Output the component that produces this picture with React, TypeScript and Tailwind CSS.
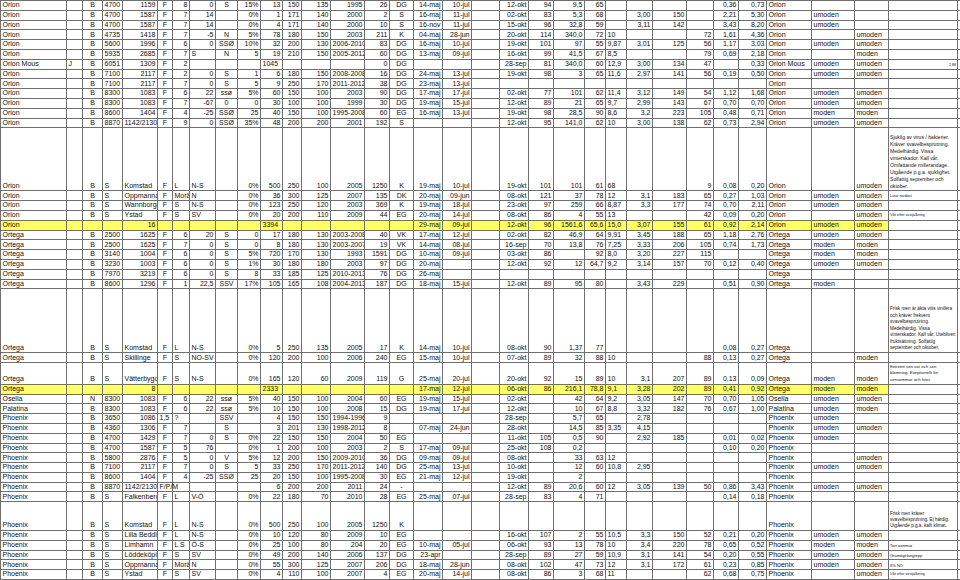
import React from "react";

// column widths, cols 0-33 (32 = notes, 33 = spill column at the right edge)
const WCLS = [
  "w-[66px]", "w-[16px]", "w-[20px]", "w-[20px]", "w-[35px]", "w-[15px]", "w-[17px]", "w-[26px]",
  "w-[22px]", "w-[23px]", "w-[22px]", "w-[19px]", "w-[29px]", "w-[34px]", "w-[25px]", "w-[24px]",
  "w-[29px]", "w-[29px]", "w-[28px]", "w-[29px]", "w-[25px]", "w-[31px]", "w-[21px]", "w-[21px]",
  "w-[26px]", "w-[34px]", "w-[27px]", "w-[25px]", "w-[28px]", "w-[45px]", "w-[43px]", "w-[34px]",
  "w-[69px]", "w-[40px]",
];

// default alignment per column 0-31: L left, R right, C center
const ALIGN = "LLCLRCRRCRRRRRRCRRRRRRRLRRRRRLLL";

type Note = { lines: string[]; cls: string };
type Row = { h: string; a: string; b: string; c: string; y?: boolean; note?: Note };

const STD = "h-[9.8px]";

const ROWS: Row[] = [
  { h: STD, a: "Orion||B|4700|1159|F|8|0|S|15%", b: "13|150|135|1995|26|DG|14-maj|10-jul|", c: "12-okt|94|9,5|65|||||0,36|0,73|Orion||" },
  { h: STD, a: "Orion||B|4700|1587|F|7|14||0%", b: "1|171|140|2000|2|S|16-maj|11-jul|", c: "02-okt|83|5,3|68||3,00|150||2,21|5,30|Orion|umoden|" },
  { h: STD, a: "Orion||B|4700|1587|F|7|14||0%", b: "4|171|140|2000|10|S|16-nov|11-jul|", c: "15-okt|96|32,8|59||3,11|142||3,43|8,20|Orion|umoden|" },
  { h: STD, a: "Orion||B|4735|1418|F|7|-5|N|5%", b: "78|180|150|2003|211|K|04-maj|28-jun|", c: "20-okt|114|340,0|72|10|||72|1,61|4,36|Orion||umoden" },
  { h: STD, a: "Orion||B|5600|1996|F|6|0|SSØ|10%", b: "32|200|130|2006-2010|83|DG|16-maj|10-jul|", c: "19-okt|101|97|55|9,87|3,01|125|56|1,17|3,03|Orion|umoden|umoden" },
  { h: STD, a: "Orion||B|5935|2685|F|7|S|N|5", b: "19|210|150|2005-2012|60|DG|13-maj|09-jul|", c: "16-okt|99|41,5|67|8,5|||79|0,69|2,18|Orion||moden" },
  {
    h: STD, a: "Orion Mous|J|B|6051|1309|F|2|||", b: "<1045||||0|DG|||", c: "28-sep|81|340,0|60|12,9|3,00|134|47||0,33|Orion Mous|umoden|umoden",
    note: { lines: ["2,88"], cls: "text-[3.6px] leading-[6px] text-right" },
  },
  { h: STD, a: "Orion||B|7100|2117|F|2|0|S|1", b: "6|180|150|2008-2008|16|DG|24-maj|13-jul|", c: "19-okt|98|3|65|11,6|2,97|141|56|0,19|0,50|Orion|umoden|umoden" },
  { h: STD, a: "Orion||B|7100|2117|F|7|0|S|5", b: "9|250|170|2011-2012|38|DG|23-maj|13-jul|", c: "||||||||||Orion||" },
  { h: STD, a: "Orion||B|8300|1083|F|6|22|ssø|5%", b: "60|150|100|2003|90|DG|17-maj|17-jul|", c: "02-okt|77|101|62|11,4|3,12|149|54|1,12|1,68|Orion|umoden|umoden" },
  { h: STD, a: "Orion||B|8300|1083|F|7|-67|0|0", b: "30|100|100|1999|30|DG|19-maj|15-jul|", c: "12-okt|89|21|65|9,7|2,99|143|67|0,70|0,70|Orion|umoden|umoden" },
  { h: STD, a: "Orion||B|8600|1404|F|4|-25|SSØ|25", b: "40|150|100|1995-2008|60|EG|16-maj|13-jul|", c: "19-okt|98|28,5|90|8,6|3,2|223|105|0,48|0,71|Orion|moden|moden" },
  { h: STD, a: "Orion||B|8870|1142/2130|F|9|0|SSØ|35%", b: "48|200|200|2001|192|S|||", c: "12-okt|95|141,0|62|10|3,00|138|62|0,73|2,94|Orion|umoden|umoden" },
  {
    h: "h-[63px]", a: "Orion||B|S|Komstad|F|L|N-S||0%", b: "500|250|100|2005|1250|K|19-maj|10-jul|", c: "19-okt|101|101|61|68|||9|0,08|0,20|Orion||umoden",
    note: {
      lines: [
        "Sjuklig av virus / bakterier.", "Kräver svavelbesprutning.", "Medelhärdig. Vissa", "vinterskador. Kall vår.",
        "Omfattande millerandage.", "Utgående p.g.a. sjuklighet.", "Solfattig september och", "oktober.",
      ],
      cls: "text-[5.1px] leading-[7px]",
    },
  },
  {
    h: STD, a: "Orion||B|S|Oppmanna|F|Moränlera|N||0%", b: "36|300|125|2007|135|DK|20-maj|09-jun|", c: "08-okt|121|37|78|12|3,1|183|65|0,27|1,03|Orion|umoden|umoden",
    note: { lines: ["Lutar nordöst"], cls: "text-[3.7px] leading-[7px]" },
  },
  { h: STD, a: "Orion||B|S|Wannborga|F|S|N-S||0%", b: "123|250|120|2003|369|K|19-maj|18-jul|", c: "23-okt|97|259|66|8,87|3,3|177|74|0,70|2,11|Orion|umoden|umoden" },
  {
    h: STD, a: "Orion||B|S|Ystad|F|S|SV||0%", b: "20|200|110|2009|44|EG|20-maj|14-jul|", c: "08-okt|86|4|55|13|||42|0,09|0,20|Orion||umoden",
    note: { lines: ["Vikt efter avstjälkning"], cls: "text-[3.7px] leading-[7px]" },
  },
  { h: STD, y: true, a: "Orion||||16|||||", b: "<3394||||||29-maj|09-jul|", c: "12-okt|96|1561,6|65,6|15,0|3,07|155|61|0,92|2,14|Orion|umoden|umoden" },
  { h: STD, a: "Ortega||B|2500|1625|F|6|20|S|0", b: "17|180|130|2003-2008|40|VK|17-maj|12-jul|", c: "02-okt|82|46,9|64|9,91|3,45|188|65|1,18|2,76|Ortega|umoden|umoden" },
  { h: STD, a: "Ortega||B|2500|1625|F|7|0|S|0", b: "8|180|130|2003-2007|19|VK|14-maj|08-jul|", c: "16-sep|70|13,8|76|7,25|3,33|206|105|0,74|1,73|Ortega|moden|moden" },
  { h: STD, a: "Ortega||B|3140|1004|F|6|0|S|5%", b: "720|170|130|1993|1591|DG|10-maj|09-jul|", c: "03-okt|86||92|8,0|3,20|227|115|||Ortega|moden|moden" },
  { h: STD, a: "Ortega||B|3230|1003|F|6|0|S|1%", b: "30|180|180|2003|97|DG|20-maj||", c: "12-okt|92|12|64,7|9,2|3,14|157|70|0,12|0,40|Ortega|umoden|umoden" },
  { h: STD, a: "Ortega||B|7970|3219|F|6|0|S|8", b: "33|185|125|2010-2013|76|DG|26-maj||", c: "||||||||||Ortega||" },
  { h: STD, a: "Ortega||B|8600|1296|F|1|22,5|SSV|17%", b: "105|165|108|2004-2013|187|DG|18-maj|15-jul|", c: "12-okt|89|95|80||3,43|229||0,51|0,90|Ortega|moden|" },
  {
    h: "h-[64px]", a: "Ortega||B|S|Komstad|F|L|N-S||0%", b: "5|250|135|2005|17|K|14-maj|10-jul|", c: "08-okt|90|1,37|77|||||0,08|0,27|Ortega||",
    note: {
      lines: [
        "Frisk men är äkta vitis vinifera", "och kräver frekvent", "svavelbesprutning.", "Medelhärdig. Vissa",
        "vinterskador. Kall vår. Utebliven", "fruktsättning. Solfattig", "september och oktober.",
      ],
      cls: "text-[4.7px] leading-[6.5px]",
    },
  },
  { h: STD, a: "Ortega||B|S|Skillinge|F|S|NO-SV||0%", b: "120|200|100|2006|240|EG|15-maj|10-jul|", c: "07-okt|89|32|88|10|||88|0,13|0,27|Ortega||moden" },
  {
    h: "h-[21.6px]", a: "Ortega||B|S|Vätterbygd|F|S|N-S||0%", b: "165|120|60|2009|119|G|25-maj|20-jul|", c: "20-okt|92|15|89|10|3,1|207|89|0,13|0,09|Ortega|moden|moden",
    note: { lines: ["Extremt sen vår och sen", "blomning. Exeptionellt fin", "sensommar och höst"], cls: "text-[4.3px] leading-[6.4px]" },
  },
  { h: STD, y: true, a: "Ortega||||8|||||", b: "<2333||||||17-maj|12-jul|", c: "06-okt|86|216,1|78,8|9,1|3,28|202|89|0,41|0,92|Ortega|moden|moden" },
  { h: STD, a: "Osella||N|8300|1083|F|6|22|ssø|5%", b: "40|150|100|2004|60|EG|19-maj|15-jul|", c: "02-okt||42|64|9,2|3,05|147|70|0,70|1,05|Osella|umoden|umoden" },
  { h: STD, a: "Palatina||B|8300|1083|F|6|22|ssø|5%", b: "10|150|100|2008|15|DG|19-maj|17-jul|", c: "12-okt||10|67|8,8|3,32|182|76|0,67|1,00|Palatina|umoden|moden" },
  { h: STD, a: "Phoenix||B|3650|1086|<1,5|?||SSV|", b: "4|150|150|1994-1996|9||||", c: "28-sep||5,7|65||2,78|||||Phoenix|umoden|" },
  { h: STD, a: "Phoenix||B|4360|1306|F|7||S|", b: "3|201|130|1998-2012|8||07-maj|24-jun|", c: "28-okt||14,5|85|3,35|4,15|||||Phoenix|umoden|umoden" },
  { h: STD, a: "Phoenix||B|4700|1429|F|7|0|S|0%", b: "22|150|150|2004|50|EG|||", c: "11-okt|105|0,5|90||2,92|185||0,01|0,02|Phoenix|umoden|" },
  { h: STD, a: "Phoenix||B|4700|1587|F|5|76||0%", b: "1|200|100|2003|2|S|17-maj|09-jul|", c: "25-okt|108|0,2||||||0,10|0,20|Phoenix||" },
  { h: STD, a: "Phoenix||B|5800|2876|F|5|0|V|5%", b: "12|200|150|2009-2010|36|DG|09-maj|09-jul|", c: "08-okt||33|63|12||||||Phoenix||umoden" },
  { h: STD, a: "Phoenix||B|7100|2117|F|7|0|S|5", b: "33|250|170|2011-2012|140|DG|25-maj|13-jul|", c: "10-okt||12|60|10,8|2,95|||||Phoenix|umoden|umoden" },
  { h: STD, a: "Phoenix||B|8600|1404|F|4|-25|SSØ|25", b: "20|150|100|1995-2008|30|EG|21-maj|12-jul|", c: "19-okt||2||||||||Phoenix||" },
  { h: STD, a: "Phoenix||B|8870|1142/2130|<~F/P/M||||", b: "6|200|200|2011|24|-|||", c: "12-okt|89|20,6|60|12|3,05|139|50|0,86|3,43|Phoenix|umoden|umoden" },
  { h: STD, a: "Phoenix||B|S|Falkenberg|F|L|V-Ö||0%", b: "22|180|70|2010|28|EG|25-maj|07-jul|", c: "28-sep|83|4|71|||||0,14|0,18|Phoenix||" },
  {
    h: "h-[28.7px]", a: "Phoenix||B|S|Komstad|F|L|N-S||0%", b: "500|250|100|2005|1250|K|||", c: "||||||||||Phoenix||",
    note: { lines: ["Frisk men kräver", "svavelbesprutning. Ej härdig.", "Utgående p.g.a. kallt klimat."], cls: "text-[4.6px] leading-[6.2px]" },
  },
  { h: STD, a: "Phoenix||B|S|Lilla Beddinge|F|L|N-S||0%", b: "10|120|80|2009|10|EG|||", c: "16-okt|107|2|55|10,5|3,3|150|52|0,21|0,20|Phoenix|umoden|umoden" },
  {
    h: STD, a: "Phoenix||B|S|Limhamn|F|L S|Ö-S||0%", b: "25|100|80|204|20|EG|10-maj|05-jul|", c: "06-okt|93|13|78|10|3,4|220|78|0,65|0,52|Phoenix|moden|moden",
    note: { lines: ["Torr sommar"], cls: "text-[4px] leading-[7px]" },
  },
  {
    h: STD, a: "Phoenix||B|S|Löddeköpinge|F|S|SV||0%", b: "49|200|140|2006|137|DG|23-apr||", c: "28-sep|89|27|59|10,9|3,1|141|54|0,20|0,55|Phoenix|umoden|umoden",
    note: { lines: ["Gråmögelangrepp"], cls: "text-[4px] leading-[7px]" },
  },
  {
    h: STD, a: "Phoenix||B|S|Oppmanna|F|Moränlera|N||0%", b: "55|300|125|2007|206|DG|18-maj|28-jun|", c: "08-okt|102|47|73|12|3,1|172|61|0,23|0,85|Phoenix|umoden|umoden",
    note: { lines: ["8% NÖ"], cls: "text-[4px] leading-[7px]" },
  },
  {
    h: STD, a: "Phoenix||B|S|Ystad|F|S|SV||0%", b: "4|110|100|2007|4|EG|20-maj|14-jul|", c: "08-okt|86|3|68|11|||62|0,68|0,75|Phoenix||umoden",
    note: { lines: ["Vikt efter avstjälkning"], cls: "text-[3.7px] leading-[7px]" },
  },
];

const fit = (s: string, n: number) => {
  const p = s.split("|");
  while (p.length < n) p.push("");
  return p.slice(0, n);
};

function Cell({ v, col, yellow }: { v: string; col: number; yellow?: boolean }) {
  let val = v;
  let left = false;
  let spill = false;
  if (val.startsWith("<")) {
    left = true;
    val = val.slice(1);
  }
  if (val.startsWith("~")) {
    spill = true;
    val = val.slice(1);
  }
  let a = ALIGN[col];
  if (left || (a === "R" && val !== "" && !/\d/.test(val))) a = "L";
  const align = a === "R" ? "text-right" : a === "C" ? "text-center" : "text-left";
  return (
    <div
      className={`${WCLS[col]} shrink-0 flex flex-col justify-end whitespace-nowrap border-r border-[#707070] px-[1.5px] pb-[0.5px] text-[7px] leading-[8px] ${
        spill ? "overflow-visible relative z-10" : "overflow-hidden"
      } ${yellow ? "bg-[#ffff66]" : ""}`}
    >
      <span className={`block ${align}`}>{val}</span>
    </div>
  );
}

function SheetRow({ r }: { r: Row }) {
  const cells = [...fit(r.a, 10), ...fit(r.b, 9), ...fit(r.c, 13)];
  return (
    <div className={`flex ${r.h} border-b border-[#707070]`}>
      {cells.map((v, i) => (
        <Cell key={i} v={v} col={i} yellow={r.y} />
      ))}
      <div className="w-[69px] shrink-0 flex flex-col justify-end overflow-hidden border-r border-[#707070] px-[1px] pb-[0.5px]">
        {r.note?.lines.map((l, i) => (
          <span key={i} className={`block whitespace-nowrap ${r.note!.cls}`}>
            {l}
          </span>
        ))}
      </div>
      <div className="w-[40px] shrink-0" />
    </div>
  );
}

export default function App() {
  return (
    <div className="w-[960px] h-[580px] overflow-hidden bg-white text-[#111] font-['Liberation_Sans',Arial,sans-serif]">
      <div className="w-[997px] border-t border-l border-[#707070]">
        {ROWS.map((r, i) => (
          <SheetRow key={i} r={r} />
        ))}
      </div>
    </div>
  );
}
